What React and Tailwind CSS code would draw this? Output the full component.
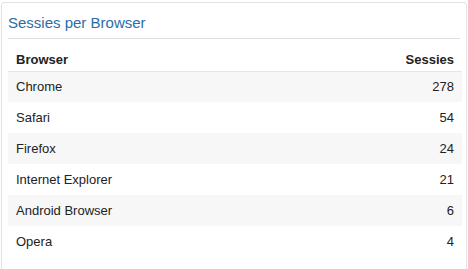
const rows = [
  { name: "Chrome", sessions: 278 },
  { name: "Safari", sessions: 54 },
  { name: "Firefox", sessions: 24 },
  { name: "Internet Explorer", sessions: 21 },
  { name: "Android Browser", sessions: 6 },
  { name: "Opera", sessions: 4 },
];

export default function App() {
  return (
    <div className="min-h-screen bg-white pl-[1px] pt-[2px] pr-[1px] font-['Liberation_Sans',Arial,sans-serif] text-[13px] text-[#222]">
      <div className="w-[466px] rounded-[3px] border border-[#e3e3e3] bg-white px-[6px] pb-4 shadow-[0_1px_1px_rgba(0,0,0,0.05)]">
        <h3 className="h-[36px] border-b border-[#e0e0e0] pt-[10px] text-[15px] leading-[20px] text-[#2a6ea6]">
          Sessies per Browser
        </h3>
        <table className="w-[454px] border-collapse">
          <thead>
            <tr className="h-[32px] border-b border-[#e6e6e6]">
              <th className="px-2 pt-[9px] text-left font-bold">Browser</th>
              <th className="px-2 pt-[9px] text-right font-bold">Sessies</th>
            </tr>
          </thead>
          <tbody>
            {rows.map((row, i) => (
              <tr
                key={row.name}
                className={i % 2 === 0 ? "h-[31px] bg-[#f7f7f7]" : "h-[31px] bg-white"}
              >
                <td className="px-2">{row.name}</td>
                <td className="px-2 text-right">{row.sessions}</td>
              </tr>
            ))}
          </tbody>
        </table>
      </div>
    </div>
  );
}
